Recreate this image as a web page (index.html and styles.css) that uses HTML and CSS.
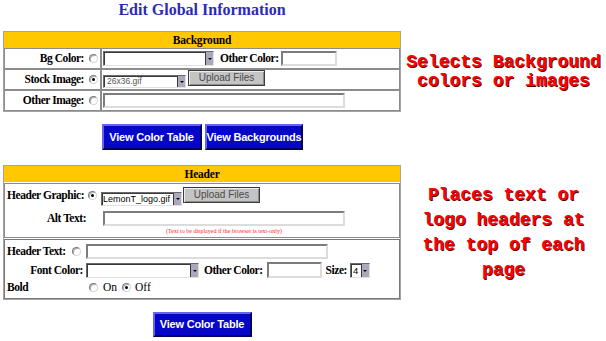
FILE: index.html
```html
<!DOCTYPE html>
<html>
<head>
<meta charset="utf-8">
<title>Edit Global Information</title>
<link rel="stylesheet" href="styles.css">
</head>
<body>
<div class="page">
  <h1 class="title">Edit Global Information</h1>
  <div class="filler"></div>

  <div class="panel">
    <div class="bar">Background</div>
    <div class="prow">
      <div class="lcell"><span class="lbl">Bg Color:</span><span class="radio"></span></div>
      <div class="vcell">
        <span class="select w111"><span class="txt"></span><span class="arr"></span></span>
        <span class="lbl ml6">Other Color:</span>
        <span class="input w56 ml2"></span>
      </div>
    </div>
    <div class="prow">
      <div class="lcell"><span class="lbl">Stock Image:</span><span class="radio on"></span></div>
      <div class="vcell top">
        <span class="select w83 sel-low"><span class="txt grey">26x36.gif</span><span class="arr"></span></span>
        <span class="ubtn ml2">Upload Files</span>
      </div>
    </div>
    <div class="prow">
      <div class="lcell"><span class="lbl">Other Image:</span><span class="radio"></span></div>
      <div class="vcell">
        <span class="input w242"></span>
      </div>
    </div>
  </div>
  <div class="note note1">Selects Background<br>colors or images</div>

  <div class="btnrow">
    <span class="bbtn w100">View Color Table</span>
    <span class="bbtn w98">View Backgrounds</span>
  </div>
  <div class="filler"></div>

  <div class="panel">
    <div class="bar">Header</div>
    <div class="box box1">
      <div class="hrow hg">
        <span class="lbl hg-label">Header Graphic:</span>
        <span class="radio on"></span>
        <span class="select w81 ml4 sel-end"><span class="txt tight">LemonT_logo.gif</span><span class="arr"></span></span>
        <span class="ubtn ml1 btn-start">Upload Files</span>
      </div>
      <div class="hrow alt">
        <span class="lbl alt-label">Alt Text:</span>
        <span class="input w242"></span>
      </div>
      <div class="hint">(Text to be displayed if the browser is text-only)</div>
    </div>
    <div class="box box2">
      <div class="hrow ht">
        <span class="leftcol"><span class="lbl">Header Text:</span><span class="radio"></span></span>
        <span class="input w242"></span>
      </div>
      <div class="hrow fc">
        <span class="leftcol right"><span class="lbl">Font Color:</span></span>
        <span class="select w113"><span class="txt"></span><span class="arr"></span></span>
        <span class="lbl ml5">Other Color:</span>
        <span class="input w55 tall ml4"></span>
        <span class="lbl ml4">Size:</span>
        <span class="select w20 ml3"><span class="txt">4</span><span class="arr"></span></span>
      </div>
      <div class="hrow bold">
        <span class="leftcol"><span class="lbl">Bold</span></span>
        <span class="radio ml3"></span>
        <span class="opt ml5">On</span>
        <span class="radio on ml5"></span>
        <span class="opt ml4">Off</span>
      </div>
    </div>
  </div>
  <div class="note note2">Places text or<br>logo headers at<br>the top of each<br>page</div>

  <div class="btnrow last">
    <span class="bbtn w99">View Color Table</span>
  </div>
  <div class="filler"></div>
</div>
</body>
</html>
```

FILE: styles.css
```css
html, body {
  margin: 0;
  padding: 0;
  background: #ffffff;
}

body {
  font-family: "Liberation Serif", "Times New Roman", serif;
  font-size: 11px;
  color: #000;
}

.page {
  display: grid;
  grid-template-columns: 398px 205px;
  padding-left: 3px;
}

.title {
  margin: 0;
  height: 31px;
  text-align: center;
  font: bold 16px/20px "Liberation Serif", serif;
  color: #2b2bb8;
}

.panel {
  box-sizing: border-box;
  width: 398px;
  border: 1px solid #a4a4a4;
}

.bar {
  height: 16px;
  background: #ffc800;
  text-align: center;
  font-weight: bold;
  font-size: 11.5px;
  line-height: 16px;
  letter-spacing: -0.2px;
}

.prow {
  display: flex;
  height: 21px;
}

.lcell {
  box-sizing: border-box;
  width: 97px;
  border: 1px solid #8c8c8c;
  display: flex;
  align-items: center;
  justify-content: flex-end;
  gap: 5px;
  padding-right: 2px;
}

.vcell {
  flex: 1;
  box-sizing: border-box;
  border: 1px solid #8c8c8c;
  display: flex;
  align-items: center;
  padding-left: 1px;
}

.vcell.top {
  align-items: flex-start;
}

.lbl {
  font-weight: bold;
  font-size: 11.5px;
  letter-spacing: -0.45px;
  white-space: nowrap;
  line-height: 13px;
}

.opt {
  font-size: 11.5px;
  line-height: 13px;
}

.radio {
  position: relative;
  flex: none;
  box-sizing: border-box;
  width: 9px;
  height: 9px;
  border: 1px solid;
  border-color: #7a7a7a #d4d4d4 #d4d4d4 #7a7a7a;
  border-radius: 50%;
  background: #fff;
  box-shadow: inset 1px 1px 0 #b0b0b0;
}

.radio.on::after {
  content: "";
  position: absolute;
  left: 2px;
  top: 2px;
  width: 3px;
  height: 3px;
  border-radius: 50%;
  background: #000;
}

.select {
  flex: none;
  display: flex;
  box-sizing: border-box;
  height: 15px;
  border: 1px solid;
  border-color: #6a6a6a #e0e0e0 #e0e0e0 #6a6a6a;
  box-shadow: inset 1px 1px 0 #3a3a3a;
  background: #fff;
}

.select .txt {
  flex: 1;
  overflow: hidden;
  white-space: nowrap;
  padding-left: 2px;
  font: 9.5px/13px "Liberation Sans", Arial, sans-serif;
  color: #000;
}

.select .txt.tight {
  font-size: 9px;
  padding-left: 1px;
}

.select .txt.grey {
  color: #555;
  font-size: 8.5px;
  padding-left: 3px;
}

.select .arr {
  flex: none;
  width: 8px;
  box-sizing: border-box;
  background: #a9a9bb;
  border-left: 1px solid #3a3a3a;
  display: flex;
  align-items: center;
  justify-content: center;
}

.select .arr::before {
  content: "";
  border-left: 2px solid transparent;
  border-right: 2px solid transparent;
  border-top: 2px solid #000;
}

.sel-low {
  height: 13px;
  margin-top: 5px;
}

.sel-low .txt {
  line-height: 11px;
}

.sel-end {
  align-self: flex-end;
  height: 14px;
}

.sel-end .txt {
  line-height: 12px;
}

.input {
  flex: none;
  display: block;
  box-sizing: border-box;
  height: 15px;
  border: 2px solid;
  border-color: #7c7c7c #dcdcdc #dcdcdc #7c7c7c;
  background: #fff;
}

.input.tall {
  height: 16px;
}

.ubtn {
  flex: none;
  box-sizing: border-box;
  width: 77px;
  height: 16px;
  border: 1px solid #3c3c3c;
  background: #c4c4c4;
  box-shadow: inset 1px 1px 0 #ececec, inset -1px -1px 0 #8a8a8a;
  font: 10px/14px "Liberation Sans", Arial, sans-serif;
  color: #4a4a4a;
  text-align: center;
}

.btn-start {
  align-self: flex-start;
  margin-top: 3px;
}

.w20 { width: 20px; }
.w55 { width: 55px; }
.w56 { width: 56px; }
.w81 { width: 81px; }
.w83 { width: 83px; }
.w111 { width: 111px; }
.w113 { width: 113px; }
.w242 { width: 242px; }
.w98 { width: 98px; }
.w99 { width: 99px; }
.w100 { width: 100px; }

.ml1 { margin-left: 1px; }
.ml2 { margin-left: 2px; }
.ml3 { margin-left: 3px; }
.ml4 { margin-left: 4px; }
.ml5 { margin-left: 5px; }
.ml6 { margin-left: 6px; }

.btnrow {
  display: flex;
  justify-content: center;
  gap: 3px;
  margin: 12px 0 15px;
}

.btnrow.last {
  margin: 12px 0 0;
}

.bbtn {
  box-sizing: border-box;
  height: 26px;
  background: #0606c8;
  border: 2px solid;
  border-color: #6464ee #00005c #00005c #6464ee;
  color: #fff;
  font: bold 11px/22px "Liberation Sans", Arial, sans-serif;
  letter-spacing: -0.2px;
  text-align: center;
  white-space: nowrap;
}

.btnrow.last .bbtn {
  height: 25px;
  line-height: 21px;
}

.box {
  box-sizing: border-box;
  margin-top: 1px;
  border: 1px solid #8c8c8c;
  padding-left: 2px;
}

.box1 {
  height: 55px;
}

.box2 {
  height: 60px;
  border-color: #7a7a7a;
}

.hrow {
  display: flex;
  align-items: center;
}

.hg {
  height: 22px;
}

.hg-label {
  width: 81px;
  flex: none;
}

.alt {
  height: 15px;
  margin-top: 5px;
}

.alt-label {
  flex: none;
  box-sizing: border-box;
  width: 96px;
  padding-left: 40px;
}

.hint {
  margin: 1px 0 0 96px;
  width: 242px;
  text-align: center;
  font-size: 6px;
  line-height: 8px;
  color: #ff1c1c;
  white-space: nowrap;
}

.ht {
  height: 15px;
  margin-top: 4px;
}

.fc {
  height: 16px;
  margin-top: 3px;
}

.fc .select {
  align-self: flex-end;
}

.bold {
  height: 12px;
  margin-top: 3px;
}

.leftcol {
  flex: none;
  box-sizing: border-box;
  width: 79px;
  display: flex;
  align-items: center;
  gap: 6px;
}

.leftcol.right {
  justify-content: flex-end;
  padding-right: 3px;
}

.note {
  align-self: center;
  text-align: center;
  font: bold 18px/19px "Liberation Mono", "Courier New", monospace;
  color: #ff0000;
  text-shadow: 1px 1px 0 #5a0000;
  white-space: nowrap;
}

.note2 {
  line-height: 25px;
}
```
